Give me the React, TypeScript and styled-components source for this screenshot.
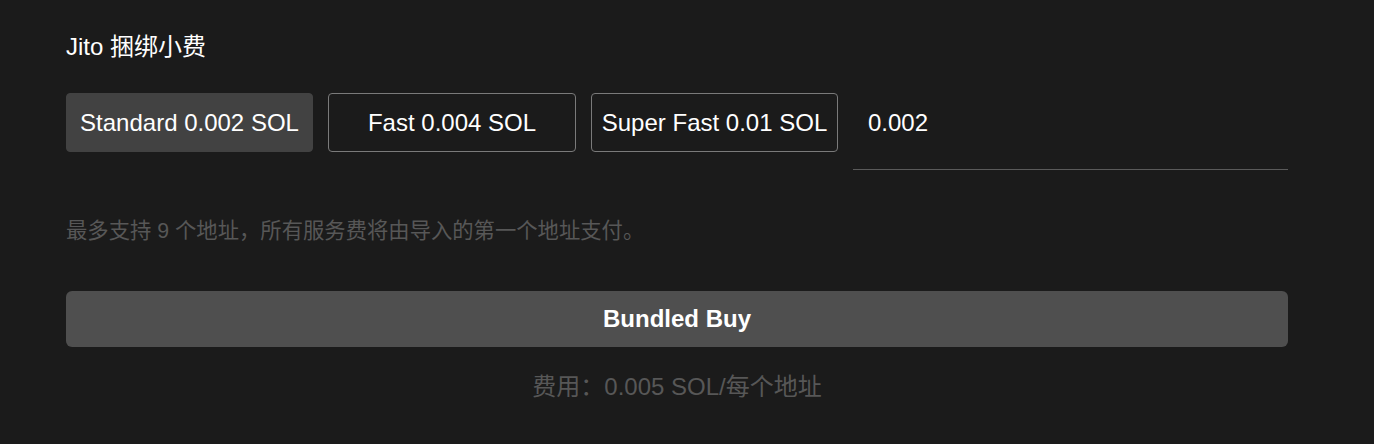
import React from "react";
import styled, { createGlobalStyle } from "styled-components";

const Global = createGlobalStyle`
  html, body { margin: 0; padding: 0; background: #1b1b1b; }
  body { font-family: Arial, "Liberation Sans", "Noto Sans CJK SC", sans-serif; }
`;

const Page = styled.div`
  width: 1374px;
  height: 444px;
  background: #1b1b1b;
  box-sizing: border-box;
  padding: 33px 86px 0 66px;
  display: flex;
  flex-direction: column;
`;

const Title = styled.div`
  color: #ffffff;
  font-size: 24px;
  line-height: 28px;
  height: 28px;
  white-space: nowrap;
`;

const Row = styled.div`
  margin-top: 32px;
  display: grid;
  grid-template-columns: 247px 248px 247px 1fr;
  column-gap: 15px;
  align-items: start;
`;

const Option = styled.button<{ $active?: boolean }>`
  height: 59px;
  box-sizing: border-box;
  border-radius: 4px;
  border: 1px solid ${(p) => (p.$active ? "#424242" : "#7a7a7a")};
  background: ${(p) => (p.$active ? "#424242" : "transparent")};
  color: #ffffff;
  font-family: inherit;
  font-size: 24px;
  padding: 0;
  white-space: nowrap;
  cursor: pointer;
`;

const InputWrap = styled.div`
  height: 77px;
  box-sizing: border-box;
  border-bottom: 1px solid #5a5a5a;
  display: flex;
  align-items: flex-start;
`;

const Input = styled.input`
  width: 100%;
  height: 59px;
  box-sizing: border-box;
  padding: 0 15px;
  background: transparent;
  border: none;
  outline: none;
  color: #ffffff;
  font-family: inherit;
  font-size: 24px;
`;

const Hint = styled.div`
  margin-top: 47px;
  color: #575757;
  font-size: 21.33px;
  line-height: 28px;
  white-space: nowrap;
`;

const BuyButton = styled.button`
  margin-top: 46px;
  width: 100%;
  height: 56px;
  border: none;
  border-radius: 6px;
  background: #4f4f4f;
  color: #ffffff;
  font-family: inherit;
  font-size: 24px;
  font-weight: bold;
  cursor: pointer;
`;

const Fee = styled.div`
  margin-top: 26px;
  text-align: center;
  color: #575757;
  font-size: 24px;
  line-height: 28px;
  white-space: nowrap;
`;

export default function App() {
  return (
    <>
      <Global />
      <Page>
        <Title>Jito 捆绑小费</Title>
        <Row>
          <Option $active>Standard 0.002 SOL</Option>
          <Option>Fast 0.004 SOL</Option>
          <Option>Super Fast 0.01 SOL</Option>
          <InputWrap>
            <Input defaultValue="0.002" />
          </InputWrap>
        </Row>
        <Hint>最多支持 9 个地址，所有服务费将由导入的第一个地址支付。</Hint>
        <BuyButton>Bundled Buy</BuyButton>
        <Fee>费用：0.005 SOL/每个地址</Fee>
      </Page>
    </>
  );
}
